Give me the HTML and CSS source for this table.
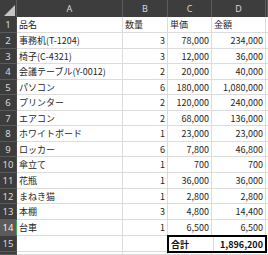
FILE: index.html
```html
<!DOCTYPE html>
<html lang="ja">
<head>
<meta charset="utf-8">
<link rel="stylesheet" href="styles.css">
</head>
<body>
<div class="sheet">
  <div class="corner"><svg width="11" height="11" viewBox="0 0 11 11"><polygon points="11,0 11,11 0,11" fill="#c4c4c4"/></svg></div>
  <div class="ch">A</div><div class="ch">B</div><div class="ch">C</div><div class="ch">D</div><div class="ch"></div>

  <div class="rh">1</div><div class="c">品名</div><div class="c">数量</div><div class="c">単価</div><div class="c">金額</div><div class="c"></div>
  <div class="rh">2</div><div class="c">事務机(T-1204)</div><div class="c n">3</div><div class="c n">78,000</div><div class="c n">234,000</div><div class="c"></div>
  <div class="rh">3</div><div class="c">椅子(C-4321)</div><div class="c n">3</div><div class="c n">12,000</div><div class="c n">36,000</div><div class="c"></div>
  <div class="rh">4</div><div class="c">会議テーブル(Y-0012)</div><div class="c n">2</div><div class="c n">20,000</div><div class="c n">40,000</div><div class="c"></div>
  <div class="rh">5</div><div class="c">パソコン</div><div class="c n">6</div><div class="c n">180,000</div><div class="c n">1,080,000</div><div class="c"></div>
  <div class="rh">6</div><div class="c">プリンター</div><div class="c n">2</div><div class="c n">120,000</div><div class="c n">240,000</div><div class="c"></div>
  <div class="rh">7</div><div class="c">エアコン</div><div class="c n">2</div><div class="c n">68,000</div><div class="c n">136,000</div><div class="c"></div>
  <div class="rh">8</div><div class="c">ホワイトボード</div><div class="c n">1</div><div class="c n">23,000</div><div class="c n">23,000</div><div class="c"></div>
  <div class="rh">9</div><div class="c">ロッカー</div><div class="c n">6</div><div class="c n">7,800</div><div class="c n">46,800</div><div class="c"></div>
  <div class="rh">10</div><div class="c">傘立て</div><div class="c n">1</div><div class="c n">700</div><div class="c n">700</div><div class="c"></div>
  <div class="rh">11</div><div class="c">花瓶</div><div class="c n">1</div><div class="c n">36,000</div><div class="c n">36,000</div><div class="c"></div>
  <div class="rh">12</div><div class="c">まねき猫</div><div class="c n">1</div><div class="c n">2,800</div><div class="c n">2,800</div><div class="c"></div>
  <div class="rh">13</div><div class="c">本棚</div><div class="c n">3</div><div class="c n">4,800</div><div class="c n">14,400</div><div class="c"></div>
  <div class="rh sel">14</div><div class="c">台車</div><div class="c n">1</div><div class="c n">6,500</div><div class="c n">6,500</div><div class="c"></div>
  <div class="rh">15</div><div class="c"></div><div class="c"></div>
  <div class="total"><div class="tl">合計</div><div class="tv">1,896,200</div></div>
  <div class="c"></div>
  <div class="rh"></div><div class="c"></div><div class="c"></div><div class="c"></div><div class="c"></div><div class="c"></div>
</div>
</body>
</html>
```
FILE: styles.css
```css
html, body {
  margin: 0;
  padding: 0;
  background: #ffffff;
}
body {
  width: 268px;
  height: 255px;
  overflow: hidden;
  font-family: "Noto Sans CJK JP", "Noto Sans", sans-serif;
  font-size: 9px;
  color: #262626;
}
.sheet {
  display: grid;
  width: 268px;
  height: 255px;
  overflow: hidden;
  grid-template-columns: 17px 106px 45px 44px 54px 2px;
  grid-template-rows: 17px 16px 16px 15px 16px 15px 16px 15px 16px 15px 16px 16px 15px 16px 16px 16px 3px;
}
.corner {
  background: #3d3d3d;
  border-right: 1px solid #595959;
  display: flex;
  align-items: flex-end;
  justify-content: flex-end;
  padding: 0 1px 1px 0;
}
.corner svg { display: block; }
.ch {
  background: #3d3d3d;
  color: #d8d8d8;
  border-right: 1px solid #5c5c5c;
  display: flex;
  align-items: center;
  justify-content: center;
  font-size: 9px;
  font-family: "Noto Sans", "Noto Sans CJK JP", sans-serif;
}
.rh {
  background: #3d3d3d;
  color: #d8d8d8;
  border-bottom: 1px solid #5a5a5a;
  border-right: 1px solid #4a4a4a;
  display: flex;
  align-items: center;
  justify-content: center;
  font-family: "Noto Sans", "Noto Sans CJK JP", sans-serif;
  font-size: 9.5px;
}
.rh.sel {
  background: #5b5b5b;
  color: #f0f0f0;
  border-right: 1px solid #43a063;
}
.c {
  border-right: 1px solid #dcdcdc;
  border-bottom: 1px solid #dcdcdc;
  display: flex;
  align-items: center;
  padding: 0 2px 0 2px;
  white-space: nowrap;
  overflow: hidden;
  line-height: 1;
}
.n {
  justify-content: flex-end;
  padding-right: 2px;
}
.total {
  grid-column: span 2;
  margin: -1px;
  border: 2px solid #000000;
  display: flex;
  position: relative;
  z-index: 1;
  background: #ffffff;
  font-weight: bold;
  color: #111111;
}
.tl {
  width: 42px;
  border-right: 1px solid #dcdcdc;
  display: flex;
  align-items: center;
  padding-left: 2px;
}
.tv {
  flex: 1;
  display: flex;
  align-items: center;
  justify-content: flex-end;
  padding-right: 2px;
}
```
